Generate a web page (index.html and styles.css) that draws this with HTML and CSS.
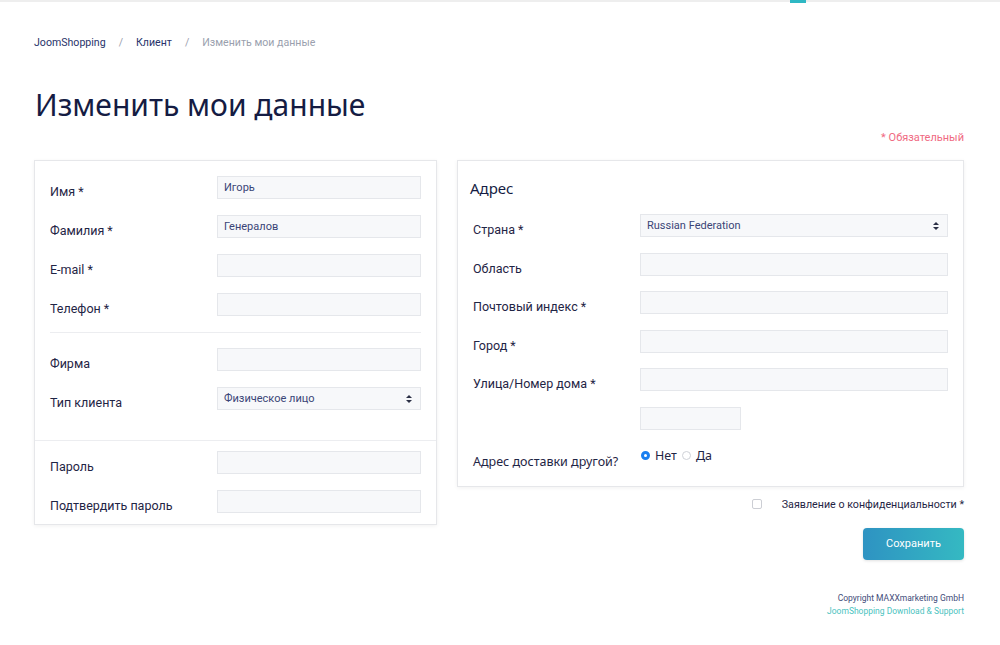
FILE: index.html
```html
<!DOCTYPE html>
<html lang="ru">
<head>
<meta charset="utf-8">
<title>Изменить мои данные</title>
<link rel="stylesheet" href="styles.css">
</head>
<body>
<div class="topbar"><span class="topbar-mark"></span></div>
<main class="page">
  <nav class="crumbs">
    <a class="crumb">JoomShopping</a><span class="sep">/</span><a class="crumb">Клиент</a><span class="sep">/</span><span class="crumb-current">Изменить мои данные</span>
  </nav>
  <h1 class="title">Изменить мои данные</h1>
  <div class="required-note">* Обязательный</div>
  <div class="columns">
    <div class="card card-left">
      <div class="section section-main">
        <div class="row"><label class="lbl">Имя *</label><div class="field">Игорь</div></div>
        <div class="row"><label class="lbl">Фамилия *</label><div class="field">Генералов</div></div>
        <div class="row"><label class="lbl">E-mail *</label><div class="field"></div></div>
        <div class="row"><label class="lbl">Телефон *</label><div class="field"></div></div>
        <div class="divider"></div>
        <div class="row"><label class="lbl">Фирма</label><div class="field"></div></div>
        <div class="row"><label class="lbl">Тип клиента</label><div class="field select">Физическое лицо<span class="arrows"></span></div></div>
      </div>
      <div class="section section-pass">
        <div class="row"><label class="lbl">Пароль</label><div class="field"></div></div>
        <div class="row"><label class="lbl">Подтвердить пароль</label><div class="field"></div></div>
      </div>
    </div>
    <div class="right-col">
      <div class="card card-right">
        <h2 class="card-title">Адрес</h2>
        <div class="row row-r"><label class="lbl">Страна *</label><div class="field select">Russian Federation<span class="arrows"></span></div></div>
        <div class="row row-r"><label class="lbl">Область</label><div class="field"></div></div>
        <div class="row row-r"><label class="lbl">Почтовый индекс *</label><div class="field"></div></div>
        <div class="row row-r"><label class="lbl">Город *</label><div class="field"></div></div>
        <div class="row row-r"><label class="lbl">Улица/Номер дома *</label><div class="field"></div></div>
        <div class="row row-r"><label class="lbl"></label><div class="field field-short"></div></div>
        <div class="row row-radio"><label class="lbl lbl-wide">Адрес доставки другой?</label>
          <div class="radios"><span class="radio radio-on"></span><span class="radio-text">Нет</span><span class="radio"></span><span class="radio-text">Да</span></div>
        </div>
      </div>
      <div class="privacy"><span class="checkbox"></span><span class="privacy-text">Заявление о конфиденциальности *</span></div>
      <div class="actions"><button class="btn">Сохранить</button></div>
    </div>
  </div>
  <footer class="footer">
    <div class="copy">Copyright MAXXmarketing GmbH</div>
    <div class="support">JoomShopping Download &amp; Support</div>
  </footer>
</main>
</body>
</html>
```

FILE: styles.css
```css
* { box-sizing: border-box; }
html, body { margin: 0; padding: 0; background: #fff; }
body { font-family: Roboto, "Noto Sans", sans-serif; color: #1f2545; }

.topbar { height: 2px; background: #eeeeee; display: flex; }
.topbar-mark { display: block; width: 16px; height: 3px; margin-left: 790px; background: #2fb8c4; }

.page { width: 930px; margin-left: 34px; }

.crumbs { margin-top: 34px; font-size: 10.6px; line-height: 14px; display: flex; align-items: center; }
.crumb { color: #28336a; }
.sep { color: #9ba0ae; margin: 0 13px; }
.crumb-current { color: #9a9fae; }

.title { font-family: "Noto Sans", sans-serif; font-weight: 400; font-size: 30px; line-height: 40px; color: #151c43; margin: 35px 0 0 1px; }

.required-note { text-align: right; font-size: 11px; color: #f06a82; margin-top: 6px; line-height: 14px; }

.columns { display: flex; gap: 20px; margin-top: 15px; align-items: flex-start; }

.card { background: #fff; border: 1px solid #e6e7ea; box-shadow: 0 1px 4px rgba(0,0,0,0.06); }
.card-left { width: 403px; }
.right-col { width: 507px; }
.card-right { padding: 15px 15px 17px 12px; }

.section-main { padding: 15px 15px 30px 15px; }
.section-pass { border-top: 1px solid #ecedf0; padding: 10px 15px 11px 15px; }

.row { display: flex; align-items: flex-start; height: 23px; margin-bottom: 16px; }
.row:last-child { margin-bottom: 0; }
.lbl { width: 167px; flex: none; font-size: 12.5px; color: #1f2545; padding-top: 8px; line-height: 15px; }
.field { flex: 1; height: 23px; background: #f7f8fa; border: 1px solid #e5e7eb; font-size: 11px; color: #3a4577; padding: 0 6px; line-height: 21px; position: relative; }
.select .arrows { position: absolute; right: 8px; top: 7px; width: 6px; height: 8px; }
.select .arrows::before, .select .arrows::after { content: ""; position: absolute; left: 0; border-left: 3px solid transparent; border-right: 3px solid transparent; }
.select .arrows::before { top: 0; border-bottom: 3.5px solid #2b2f45; }
.select .arrows::after { bottom: 0; border-top: 3.5px solid #2b2f45; }

.divider { height: 1px; background: #ecedf0; margin: 15px 0 15px 0; }

.card-title { font-family: "Noto Sans", sans-serif; font-weight: 400; font-size: 15px; line-height: 20px; margin: 2px 0 16px 0; color: #151c43; }
.row-r { margin-left: 3px; margin-bottom: 15.6px; }
.field-short { flex: none; width: 101px; }
.row-radio { margin-left: 3px; margin-top: 18px; height: auto; margin-bottom: 0; }
.lbl-wide { font-family: "Noto Sans", sans-serif; padding-top: 6px; font-size: 12.5px; }
.radios { display: flex; align-items: center; font-family: "Noto Sans", sans-serif; font-size: 12.5px; color: #1f2545; margin-left: 1px; height: 15px; }
.radio { width: 9px; height: 9px; border-radius: 50%; border: 1px solid #cfd2d8; background: #fff; flex: none; }
.radio-on { border: 3px solid #1a7ff0; background: #fff; }
.radio-text { margin: 0 5px 0 5px; }

.privacy { display: flex; justify-content: flex-end; align-items: center; margin-top: 11px; font-size: 10.7px; color: #1f2545; }
.checkbox { width: 10px; height: 10px; border: 1px solid #ccced4; border-radius: 2px; margin-right: 20px; background: #fff; }
.actions { display: flex; justify-content: flex-end; margin-top: 17px; }
.btn { width: 101px; height: 32px; border: none; border-radius: 4px; background: linear-gradient(90deg, #2e93c2, #35b9c2); color: #fff; font-family: Roboto, sans-serif; font-size: 11px; box-shadow: 0 1px 3px rgba(0,0,0,0.12); }

.footer { text-align: right; font-size: 8.5px; line-height: 13px; margin-top: 32px; }
.copy { color: #434c7a; }
.support { color: #4cc3c0; }
```
